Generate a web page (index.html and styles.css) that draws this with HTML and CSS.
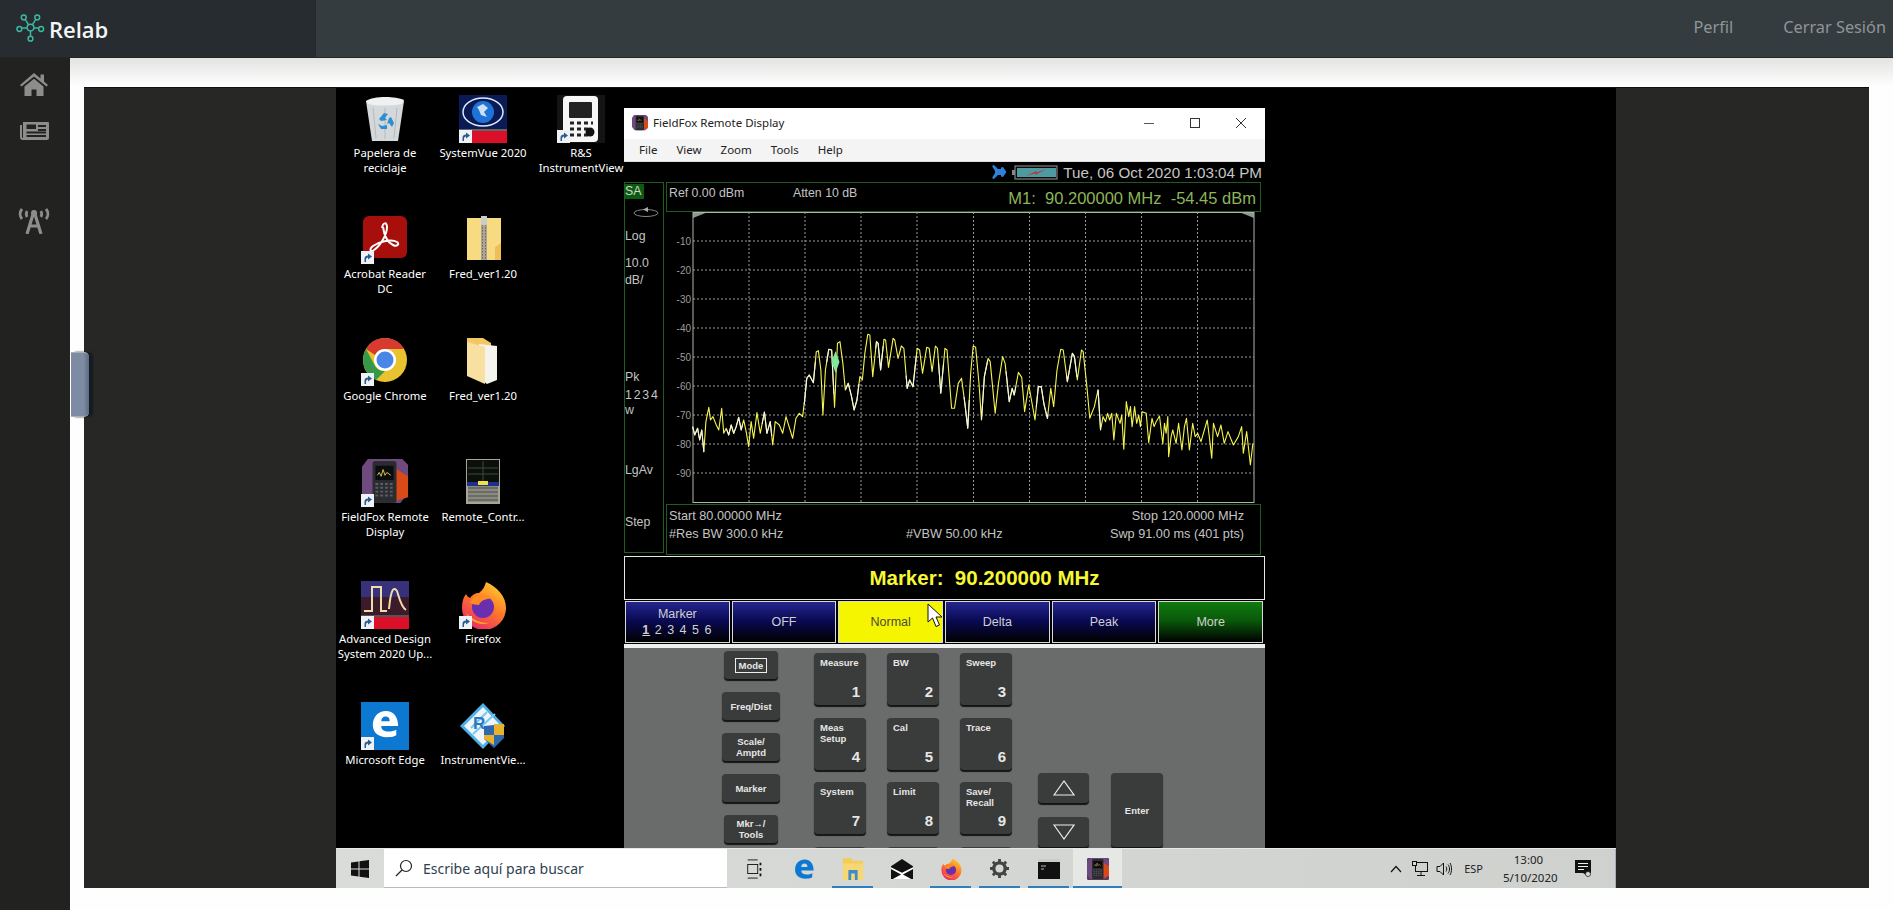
FILE: index.html
```html
<!DOCTYPE html>
<html lang="es">
<head>
<meta charset="utf-8">
<title>Relab</title>
<link rel="stylesheet" href="styles.css">
</head>
<body>
<svg class="defs" width="0" height="0" aria-hidden="true">
  <defs>
    <linearGradient id="ffg" x1="0.800" y1="0" x2="0.200" y2="1"><stop offset="0" stop-color="#ffd02e"/><stop offset=".45" stop-color="#ff7a2a"/><stop offset="1" stop-color="#e8246a"/></linearGradient>
    <symbol id="sc" viewBox="0 0 13 13"><rect width="13" height="13" fill="#eef1f5"/><path d="M3.500 11V7.500C3.500 5.500 5 4.500 7 4.500V2.500L11 5.500 7 8.500V6.500C5.800 6.500 5 7.500 5 9V11Z" fill="#2a5c94"/></symbol>
    <symbol id="ffx" viewBox="0 0 48 48">
      <path d="M27 1C38 6 47 15 47 27A22 22 0 0 1 3 27C3 21 4 17 7 13 8 15 9 16 11 17 13 14 16 12 20 12 24 9 26 5 27 1Z" fill="url(#ffg)"/>
      <circle cx="24" cy="26" r="11" fill="#6a2fb0"/>
      <path d="M11 22C14 14 26 11 34 18 28 17 22 19 20 24 17 24 14 23 11 22Z" fill="#ff8a20"/>
      <path d="M7 32C10 40 20 45 30 42 22 42 14 39 7 32Z" fill="#ffa02a"/>
    </symbol>
    <symbol id="ffd" viewBox="0 0 48 48">
      <path d="M0 8 6 0H42L48 6V36L40 46H8L0 36Z" fill="#6e4a7e"/>
      <path d="M32 8 48 18V40L34 44Z" fill="#d84a18"/>
      <rect x="11" y="2" width="25" height="44" rx="3" fill="#2a2c30"/>
      <rect x="14" y="7" width="19" height="15" fill="#0c0c10"/>
      <path d="M16 17l2-3 2 4 2-7 2 6 2-3 4 3" fill="none" stroke="#d8c84a"/>
      <path d="M14 26h19M14 30h19M14 34h19M14 38h19" stroke="#5a5c62" stroke-width="2" stroke-dasharray="3 2"/>
    </symbol>
    <symbol id="edge" viewBox="0 0 32 32">
      <path d="M3 17C3 8 9 2 17 2 25 2 30 8 30 18H12C12 22 15 24 20 24 23 24 26 23 28 22V28C25 30 22 30 18 30 9 30 3 25 3 17ZM12 13H21C21 9 19 8 16.500 8 14 8 12 10 12 13Z" fill="currentColor"/>
    </symbol>
  </defs>
</svg>

<header class="topbar">
  <div class="brand">
    <svg class="brand-logo" viewBox="0 0 30 30" fill="none" stroke="#3eb8a2" stroke-width="1.500">
      <circle cx="15" cy="14" r="3.500"/><circle cx="8" cy="3.500" r="2.500"/><circle cx="22" cy="3.500" r="2.500"/><circle cx="3.500" cy="15.500" r="2.500"/><circle cx="26" cy="15.500" r="2.500"/><circle cx="15" cy="25.500" r="2.500"/>
      <path d="M13 11 9.500 5.500M17 11l3.500-5.500M11.500 14.500H6M18.500 14.500H23.500M15 17.500V23"/>
    </svg>
    <span class="brand-name">Relab</span>
  </div>
  <nav class="topnav"><a>Perfil</a><a>Cerrar Sesión</a></nav>
</header>

<div class="shell">
  <aside class="sidebar">
    <svg class="side-home" viewBox="0 0 28 23"><path d="M14 0 20.500 5.500V1.500H24V8.500L28 12 26.500 13.500 14 3.500 1.500 13.500 0 12ZM4.500 13.500 14 5.800 23.500 13.500V23H16.500V16.500H11.500V23H4.500Z" fill="#8d8d8b"/></svg>
    <svg class="side-news" viewBox="0 0 29 20"><path d="M3 2H28a1 1 0 0 1 1 1V18a2 2 0 0 1-2 2H3a3 3 0 0 1-3-3V5H2V17a1 1 0 0 0 1 1ZM6.500 4.500V9H16V4.500ZM18 5V7H26V5ZM18 9V11H26V9ZM6.500 11.500V13.500H26V11.500ZM6.500 15V17H26V15Z" fill="#8d8d8b" fill-rule="evenodd"/></svg>
    <svg class="side-ant" viewBox="0 0 32 26" fill="none" stroke="#8d8d8b" stroke-width="2.800"><path d="M4 1C1.500 4 1.500 8 4 11M28 1C30.500 4 30.500 8 28 11M9 3C8 5 8 7 9 9M23 3C24 5 24 7 23 9"/><path d="M16 3 9 26M16 3 23 26M11.500 18H20.500" stroke-width="3.200"/><circle cx="16" cy="5" r="3" fill="#8d8d8b" stroke="none"/></svg>
  </aside>

  <main class="content">
    <div class="pull-tab"></div>
    <section class="frame">
      <div class="desktop">
        <div class="icon-grid">
          <div class="dicon"><svg viewBox="0 0 48 48"><path d="M5 6 43 6 37 46H11Z" fill="#d4d8db"/><path d="M5 6C12 1 34 1 43 5L41 9C30 11 16 11 7 9Z" fill="#eef0f1"/><path d="M12 13 15 43M36 13 33 43M24 13V44" stroke="#b4babe"/><path d="M18 24l5-6 4 1-3 4 2 2-6 1ZM30 22l3 6-2 4-3-4-2 1 2-6ZM17 29l3 5h6v-4l-5 1Z" fill="#2e8fd0"/></svg><span>Papelera de reciclaje</span></div>
          <div class="dicon"><svg viewBox="0 0 48 48"><rect x="2" width="44" height="42" rx="6" fill="#a60f0c"/><path d="M21 12C22 6 26 6 26 11 26 19 19 30 13 34 9 37 8 33 12 30 19 25 31 23 36 26 39 28 36 31 32 29 26 26 23 18 22 11" fill="none" stroke="#fff" stroke-width="2"/><use href="#sc" y="35" width="13" height="13"/></svg><span>Acrobat Reader DC</span></div>
          <div class="dicon"><svg viewBox="0 0 48 48"><circle cx="24" cy="22" r="22" fill="#e8c22f"/><path d="M24 0A22 22 0 0 1 43 11H24A11 11 0 0 0 14 17L5 11A22 22 0 0 1 24 0Z" fill="#d83a2f"/><path d="M5 11 14 28A11 11 0 0 0 24 33L15 42A22 22 0 0 1 5 11Z" fill="#36994a"/><circle cx="24" cy="22" r="11" fill="#fff"/><circle cx="24" cy="22" r="8.500" fill="#4a86e8"/><use href="#sc" y="35" width="13" height="13"/></svg><span>Google Chrome</span></div>
          <div class="dicon"><svg viewBox="0 0 48 48"><use href="#ffd" width="48" height="46"/><use href="#sc" y="35" width="13" height="13"/></svg><span>FieldFox Remote Display</span></div>
          <div class="dicon"><svg viewBox="0 0 48 48"><rect width="48" height="34" fill="#37307a"/><rect y="16" width="48" height="18" fill="#3b1a2a"/><rect y="34" width="48" height="2" fill="#555"/><rect x="13" y="36" width="35" height="12" fill="#dc0f28"/><path d="M3 30H11V6H20V30H26M28 28C30 6 33 6 36 10 38 16 40 26 45 29" fill="none" stroke="#f0dca8" stroke-width="2"/><use href="#sc" y="35" width="13" height="13"/></svg><span>Advanced Design System 2020 Up...</span></div>
          <div class="dicon"><svg viewBox="0 0 48 48"><rect width="48" height="48" fill="#0c78d2"/><use href="#edge" x="9" y="7" width="30" height="30" class="edge-white"/><use href="#sc" y="35" width="13" height="13"/></svg><span>Microsoft Edge</span></div>

          <div class="dicon"><svg viewBox="0 0 48 48"><rect width="48" height="34" fill="#0a1a55"/><ellipse cx="24" cy="17" rx="20" ry="14" fill="none" stroke="#dfe8ff" stroke-width="1.500"/><circle cx="24" cy="17" r="11" fill="#1d73d8"/><path d="M18 12l6-3 5 4-4 4 3 5-6-2-2-5Z" fill="#cfe0f5"/><rect y="34" width="48" height="2" fill="#666"/><rect x="13" y="36" width="35" height="12" fill="#dc0f28"/><use href="#sc" y="35" width="13" height="13"/></svg><span>SystemVue 2020</span></div>
          <div class="dicon"><svg viewBox="0 0 48 48"><path d="M8 2H42V44H8Z" fill="#f8da80"/><path d="M36 31 42 27V44H36Z" fill="#efbf55"/><path d="M22 0h6v44h-6Z" fill="#aaa499"/><path d="M23.500 2v42M26.500 2v42" stroke="#6e6a5e" stroke-dasharray="1.500 1.500"/><rect x="22" y="0" width="6" height="9" rx="1" fill="#c9cccc"/></svg><span>Fred_ver1.20</span></div>
          <div class="dicon"><svg viewBox="0 0 48 48"><path d="M8 0H24L32 5V34H8Z" fill="#f2c862"/><path d="M20 6 38 8V42L28 46 20 40Z" fill="#f5f3ee"/><path d="M8 4 26 9V46L8 38Z" fill="#f8e0a0"/></svg><span>Fred_ver1.20</span></div>
          <div class="dicon"><svg viewBox="0 0 48 48"><rect x="7" width="34" height="45" fill="#a8a690"/><rect x="8" y="1" width="32" height="22" fill="#0c100c"/><path d="M9 15h30M9 9h30M24 2v20" stroke="#3a4a3a"/><rect x="8" y="23" width="32" height="4" fill="#20308a"/><rect x="19" y="22" width="10" height="4" fill="#f0e040"/><path d="M9 29h30M9 33h30M9 37h30M9 41h30" stroke="#6a6c6a" stroke-width="3"/></svg><span>Remote_Contr...</span></div>
          <div class="dicon"><svg viewBox="0 0 48 48"><use href="#ffx" width="48" height="48"/><use href="#sc" y="35" width="13" height="13"/></svg><span>Firefox</span></div>
          <div class="dicon"><svg viewBox="0 0 48 48"><path d="M24 1 46 24 24 47 1 24Z" fill="#4db0e8"/><path d="M24 5 42 24 24 43 5 24Z" fill="#eef6fb"/><path d="M14 32 36 12M12 26 28 10" stroke="#7cc6ee" stroke-width="2"/><text x="14" y="27" class="rs-txt">R</text><path d="M25 24 45 22V36L35 46 25 37Z" fill="#2d69ad"/><path d="M35 22H45V33H35ZM25 33H35V43L25 37Z" fill="#e8b12e"/></svg><span>InstrumentVie...</span></div>

          <div class="dicon"><svg viewBox="0 0 48 48"><rect width="48" height="48" fill="#131413"/><rect x="6" y="1" width="35" height="46" rx="4" fill="#f6f6f6"/><rect x="12" y="7" width="23" height="16" rx="1" fill="#222"/><path d="M13 28h4M20 28h4M27 28h4M34 28h2M13 34h4M20 34h4M27 34h4M13 40h4M20 40h4M27 40h4" stroke="#222" stroke-width="3"/><circle cx="33" cy="37" r="4.500" fill="#111"/><use href="#sc" y="35" width="13" height="13"/></svg><span>R&amp;S InstrumentView</span></div>
        </div>

        <div class="window">
          <div class="win-title">
            <svg class="win-ico" viewBox="0 0 48 48"><use href="#ffd" width="48" height="48"/></svg>
            <span class="win-name">FieldFox Remote Display</span>
            <div class="win-ctrls">
              <svg viewBox="0 0 12 12"><path d="M1 6.500H11" stroke="#555"/></svg>
              <svg viewBox="0 0 12 12"><rect x="1.500" y="1.500" width="9" height="9" fill="none" stroke="#333"/></svg>
              <svg viewBox="0 0 12 12"><path d="M1 1 11 11M11 1 1 11" stroke="#333"/></svg>
            </div>
          </div>
          <div class="win-menu"><span>File</span><span>View</span><span>Zoom</span><span>Tools</span><span>Help</span></div>

          <div class="fx-status">
            <svg class="fx-plug" viewBox="0 0 16 14"><path d="M1 1 3 0 7 4H10V2.500L12 2 15.500 7 12 12 10 11.500V10H7L3 14 1 13 4 8V6Z" fill="#2f80d8"/></svg>
            <svg class="fx-batt" viewBox="0 0 46 15"><rect x="3" y="1" width="42" height="13" fill="#0a0a0a" stroke="#999"/><rect y="5" width="3" height="5" fill="#888"/><rect x="5" y="3" width="39" height="9" fill="#4f9aa0"/><path d="M14 11 25 6 24 8 34 4 23 10 24 8Z" fill="#d22020"/></svg>
            <span>Tue, 06 Oct 2020 1:03:04 PM</span>
          </div>

          <div class="fx-main">
            <div class="fx-left">
              <span class="fx-sa">SA</span>
              <svg class="fx-oval" viewBox="0 0 28 12"><ellipse cx="14" cy="7" rx="12" ry="3.500" fill="none" stroke="#888"/><path d="M11 3.500 16 1V6Z" fill="#aaa"/></svg>
              <span class="fx-log">Log</span>
              <span class="fx-scale">10.0<br>dB/</span>
              <span class="fx-pk">Pk</span>
              <span class="fx-nums">1234</span>
              <span class="fx-w">w</span>
              <span class="fx-lg">LgAv</span>
              <span class="fx-step">Step</span>
            </div>
            <div class="fx-right">
              <div class="fx-head">
                <span class="fx-ref">Ref 0.00 dBm</span><span class="fx-att">Atten 10 dB</span>
                <span class="fx-m1">M1:&nbsp; 90.200000 MHz&nbsp; -54.45 dBm</span>
              </div>
              <svg class="plot" viewBox="0 0 595 292">
                <path d="M27 0h15l-15 6ZM588 0h-15l15 6Z" fill="#8f968f"/>
                <g class="grid-lines">
                  <path d="M83 0V290M139 0V290M195 0V290M251 0V290M307.500 0V290M363.500 0V290M419.500 0V290M475.500 0V290M531.500 0V290"/>
                  <path d="M27 29H588M27 58H588M27 87H588M27 116H588M27 145H588M27 174H588M27 203H588M27 232H588M27 261H588"/>
                </g>
                <rect class="plot-box" x="27" y="0.500" width="561" height="290"/>
                <g class="ylab">
                  <text x="25" y="33">-10</text><text x="25" y="62">-20</text><text x="25" y="91">-30</text><text x="25" y="120">-40</text><text x="25" y="149">-50</text><text x="25" y="178">-60</text><text x="25" y="207">-70</text><text x="25" y="236">-80</text><text x="25" y="265">-90</text>
                </g>
                <g transform="translate(-46 78) scale(.415 .3333)">
                  <polyline class="trace trace-y" points="175,410 180,435 187,415 192,450 197,420 202,485 207,395 214,352 218,390 224,380 232,405 238,420 245,355 250,430 256,415 262,435 268,405 274,430 280,410 286,382 292,420 298,390 304,425 310,470 316,395 322,445 330,368 338,430 348,366 354,430 362,395 368,465 374,395 384,405 392,430 400,380 410,420 416,445 424,385 432,370 440,380 445,330 450,265 456,255 466,278 473,185 478,182 484,240 489,375 495,240 503,178 510,180 517,352 524,160 530,155 537,220 543,300 550,280 558,320 564,360 571,330 578,260 584,270 590,190 597,133 602,135 609,260 618,155 622,160 628,240 636,148 640,150 647,232 658,145 662,150 670,205 678,168 684,175 692,295 698,270 706,290 716,175 722,180 729,250 739,172 745,175 752,245 760,168 765,175 773,310 783,175 788,180 799,355 806,355 815,280 823,265 831,340 838,415 845,250 851,168 857,172 865,280 871,390 878,260 887,205 892,215 904,370 912,280 922,200 928,220 938,335 945,295 950,315 960,247 968,262 975,365 985,285 1000,390 1008,290 1015,290 1022,345 1030,385 1038,295 1045,350 1053,240 1062,178 1068,180 1078,275 1090,190 1095,200 1102,270 1112,180 1116,185 1125,290 1132,385 1143,350 1152,300 1158,420 1164,380 1170,395 1175,370 1180,390 1185,370 1190,450 1196,370 1205,400 1209,375 1214,478 1220,335 1226,380 1230,350 1234,410 1240,350 1245,400 1250,375 1254,410 1258,365 1268,370 1274,458 1282,385 1287,410 1292,395 1300,378 1308,462 1312,400 1316,430 1320,380 1322,500 1328,440 1332,420 1340,460 1346,400 1354,480 1360,410 1365,385 1372,480 1380,400 1386,440 1392,430 1400,455 1415,390 1420,440 1426,505 1430,400 1440,440 1448,405 1456,460 1465,425 1478,465 1490,440 1498,410 1502,490 1510,425 1519,525 1525,460"/>
                  <polyline class="trace trace-w" points="175,410 180,435 187,415 192,450 197,420 202,485 207,395 214,352 218,390 224,380 232,405 238,420 245,355 250,430 256,415 262,435 268,405 274,430 280,410 286,382 292,420 298,390 304,425 310,470 316,395 322,445 330,368 338,430 348,366 354,430 362,395 368,465 374,395 384,405 392,430 400,380 410,420 416,445 424,385 432,370 440,380 445,330 450,265 456,255 466,278 473,185 478,182 484,240 489,375 495,240 503,178 510,180 517,352 524,160 530,155 537,220 543,300 550,280 558,320 564,360 571,330 578,260 584,270 590,190 597,133 602,135 609,260 618,155 622,160 628,240 636,148 640,150 647,232 658,145 662,150 670,205 678,168 684,175 692,295 698,270 706,290 716,175 722,180 729,250 739,172 745,175 752,245 760,168 765,175 773,310 783,175 788,180 799,355 806,355 815,280 823,265 831,340 838,415 845,250 851,168 857,172 865,280 871,390 878,260 887,205 892,215 904,370 912,280 922,200 928,220 938,335 945,295 950,315 960,247 968,262 975,365 985,285 1000,390 1008,290 1015,290 1022,345 1030,385 1038,295 1045,350 1053,240 1062,178 1068,180 1078,275 1090,190 1095,200 1102,270 1112,180 1116,185 1125,290 1132,385 1143,350 1152,300 1158,420"/>
                </g>
                <path d="M169.500 139 173.500 150 169.500 161 165.500 150Z" fill="#7fe89a"/>
              </svg>
              <div class="fx-foot">
                <div class="foot-row"><span>Start 80.00000 MHz</span><span>Stop 120.0000 MHz</span></div>
                <div class="foot-row foot-three"><span>#Res BW 300.0 kHz</span><span class="foot-mid">#VBW 50.00 kHz</span><span>Swp 91.00 ms (401 pts)</span></div>
              </div>
            </div>
          </div>

          <div class="marker-bar">Marker:&nbsp; 90.200000 MHz</div>

          <div class="softkeys">
            <div class="sk"><span>Marker</span><span class="sk-nums"><b>1</b> 2 3 4 5 6</span></div>
            <div class="sk"><span>OFF</span></div>
            <div class="sk sk-on"><span>Normal</span></div>
            <div class="sk"><span>Delta</span></div>
            <div class="sk"><span>Peak</span></div>
            <div class="sk sk-more"><span>More</span></div>
            <svg class="cursor" viewBox="0 0 16 25"><path d="M1 1V19L5.500 15 9 23.500 12.500 22 9 14H15Z" fill="#fff" stroke="#111"/></svg>
          </div>

          <div class="keypad">
            <div class="kcol">
              <div class="key key-s key-nar"><span class="mode-box">Mode</span></div>
              <div class="key key-s">Freq/Dist</div>
              <div class="key key-s">Scale/<br>Amptd</div>
              <div class="key key-s">Marker</div>
              <div class="key key-s key-nar">Mkr→/<br>Tools</div>
            </div>
            <div class="knum">
              <div class="key key-n"><span>Measure</span><b>1</b></div>
              <div class="key key-n"><span>BW</span><b>2</b></div>
              <div class="key key-n"><span>Sweep</span><b>3</b></div>
              <div class="key key-n"><span>Meas<br>Setup</span><b>4</b></div>
              <div class="key key-n"><span>Cal</span><b>5</b></div>
              <div class="key key-n"><span>Trace</span><b>6</b></div>
              <div class="key key-n"><span>System</span><b>7</b></div>
              <div class="key key-n"><span>Limit</span><b>8</b></div>
              <div class="key key-n"><span>Save/<br>Recall</span><b>9</b></div>
              <div class="key key-n"></div>
              <div class="key key-n"></div>
              <div class="key key-n"></div>
            </div>
            <div class="knav">
              <div class="key key-a"><svg viewBox="0 0 22 16"><path d="M1 15 11 1 21 15Z" fill="none" stroke="#eee" stroke-width="1.200"/></svg></div>
              <div class="key key-a"><svg viewBox="0 0 22 16"><path d="M1 1 11 15 21 1Z" fill="none" stroke="#eee" stroke-width="1.200"/></svg></div>
            </div>
            <div class="key key-enter">Enter</div>
          </div>
        </div>

        <div class="taskbar">
          <svg class="tb-start" viewBox="0 0 18 18"><path d="M0 2.500 7.500 1.400V8.500H0ZM8.500 1.300 18 0V8.500H8.500ZM0 9.500H7.500V16.600L0 15.500ZM8.500 9.500H18V18L8.500 16.700Z" fill="#111"/></svg>
          <div class="tb-search">
            <svg viewBox="0 0 18 18" fill="none" stroke="#222" stroke-width="1.200"><circle cx="11" cy="7" r="5.500"/><path d="M7 11 1 17"/></svg>
            <span>Escribe aquí para buscar</span>
          </div>
          <div class="tb-apps">
            <div class="tb-app"><svg class="tb-tv" viewBox="0 0 18 22" fill="none" stroke="#111"><path d="M1 1H12M1 21H12"/><rect x="1" y="6" width="11" height="10"/><path d="M15 4v3M15 10v3M15 16v3" stroke-width="2"/></svg></div>
            <div class="tb-app tb-edge"><svg viewBox="0 0 32 32"><use href="#edge" width="32" height="32"/></svg></div>
            <div class="tb-app tb-run"><svg viewBox="0 0 22 24"><path d="M0 0H9L11 3H22V24H0Z" fill="#f3cc5a"/><path d="M0 6H22V24H0Z" fill="#f7d774"/><path d="M6 13H16V24H13V17H9V24H6Z" fill="#3a8ccc"/></svg></div>
            <div class="tb-app"><svg viewBox="0 0 24 22"><path d="M0 8 12 0 24 8V22H0Z" fill="#111"/><path d="M0 9 12 15 24 9V11L13 17 22 22H2L11 17 0 11Z" fill="#fff"/></svg></div>
            <div class="tb-app tb-run"><svg viewBox="0 0 48 48"><use href="#ffx" width="48" height="48"/></svg></div>
            <div class="tb-app tb-run"><svg class="tb-gear" viewBox="0 0 20 20"><circle cx="10" cy="10" r="6" fill="none" stroke="#444" stroke-width="3.500"/><path d="M10 0v4M10 16v4M0 10h4M16 10h4M3 3l3 3M14 14l3 3M3 17l3-3M14 6l3-3" stroke="#444" stroke-width="3"/></svg></div>
            <div class="tb-app tb-run"><svg viewBox="0 0 22 20"><rect width="22" height="20" fill="#111"/><rect width="22" height="3" fill="#ccc"/><path d="M3 7h5M3 10h3" stroke="#bbb"/></svg></div>
            <div class="tb-app tb-run tb-active"><svg viewBox="0 0 48 48"><rect width="48" height="48" rx="3" fill="#5a3a5a"/><use href="#ffd" width="48" height="48"/></svg></div>
          </div>
          <div class="tb-tray">
            <svg class="tr-chev" viewBox="0 0 12 8"><path d="M1 7 6 1.500 11 7" fill="none" stroke="#111" stroke-width="1.200"/></svg>
            <svg class="tr-net" viewBox="0 0 16 16" fill="none" stroke="#111"><rect x="3.500" y="1.500" width="12" height="9"/><path d="M9 11v3M5 14.500H13"/><rect x=".5" y=".5" width="4" height="4" fill="#ddd"/></svg>
            <svg class="tr-vol" viewBox="0 0 16 16" fill="none" stroke="#111"><path d="M1 5.500H4L7.500 2V14L4 10.500H1Z"/><path d="M10 5.500C11 7 11 9 10 10.500M12 3.500C14 6 14 10 12 12.500M14 2C16 5 16 11 14 14"/></svg>
            <span class="tr-lang">ESP</span>
            <span class="tr-clock">13:00<br>5/10/2020</span>
            <svg class="tr-note" viewBox="0 0 16 18"><path d="M0 0H16V13H10L14 17 8 13H0Z" fill="#111"/><path d="M3 3.500H13M3 6.500H13M3 9.500H9" stroke="#eee"/><circle cx="13" cy="14" r="2.500" fill="#ddd" stroke="#111" stroke-width=".7"/></svg>
          </div>
        </div>
      </div>
    </section>
  </main>
</div>
</body>
</html>
```
FILE: styles.css
```css
* { box-sizing: border-box; }
html, body { margin: 0; height: 910px; overflow: hidden; }
body { font-family: "Liberation Sans", Arial, sans-serif; background: #fdfefd; }
.defs { position: absolute; }

.topbar { height: 58px; display: flex; background: #343c3f; border-bottom: 1px solid #20282b; }
.brand { width: 316px; display: flex; align-items: center; padding-left: 16px; gap: 4px; background: #272c31; border-right: 1px solid #23282c; }
.brand-logo { width: 29px; height: 29px; }
.brand-name { color: #f4f6f6; font: 600 22px/1 "Open Sans", Lato, sans-serif; margin-top: 1px; }
.topnav { flex: 1; display: flex; justify-content: flex-end; align-items: center; gap: 50px; padding: 0 7px 3px 0; color: #8f9598; font: 16.300px "Noto Sans", sans-serif; }

.shell { display: flex; height: 852px; }
.sidebar { width: 70px; background: #222321; display: flex; flex-direction: column; align-items: center; padding: 15px 2px 0 0; }
.side-home { width: 28px; height: 23px; }
.side-news { width: 29px; height: 20px; margin-top: 24px; }
.side-ant { width: 32px; height: 26px; margin-top: 68px; }

.content { position: relative; flex: 1; padding: 29px 24px 22px 14px; background: linear-gradient(#e3e4e2, #fdfefd 28px); }
.pull-tab { position: absolute; z-index: 2; left: 1px; top: 294px; width: 18px; height: 65px; background: linear-gradient(90deg, #7d8ca2, #7d8ca2 70%, #5c6a87); border: solid #a8aeb2; border-width: 1px 0; border-radius: 0 5px 5px 0; box-shadow: 4px 0 2px #151a20; }

.frame { height: 801px; display: flex; padding-left: 252px; background: #272825; border-top: 1px solid #111; }
.desktop { position: relative; width: 1280px; height: 800px; background: #000; overflow: hidden; }

.icon-grid { display: grid; grid-auto-flow: column; grid-template-rows: repeat(6, 121.4px); grid-template-columns: repeat(3, 98px); padding-top: 7px; }
.dicon { display: flex; flex-direction: column; align-items: center; color: #fff; font: 11.300px/15px "Noto Sans", sans-serif; text-align: center; }
.dicon svg { width: 48px; height: 48px; margin-bottom: 2px; flex: none; }
.edge-white { color: #fff; }
.rs-txt { font: bold 17px "Liberation Sans", sans-serif; fill: #2d78c0; }

.window { position: absolute; left: 288px; top: 20px; width: 641px; height: 741px; background: #000; overflow: hidden; display: flex; flex-direction: column; }
.win-title { height: 31px; flex: none; background: #fff; display: flex; align-items: center; padding: 0 0 2px 8px; gap: 5px; font: 11.500px "Noto Sans", sans-serif; color: #222; }
.win-ico { width: 16px; height: 16px; }
.win-name { flex: 1; }
.win-ctrls { display: flex; gap: 34px; padding-right: 18px; }
.win-ctrls svg { width: 12px; height: 12px; }
.win-menu { height: 23px; flex: none; background: #f4f4f4; display: flex; padding-left: 15px; font: 11.500px/21px "Noto Sans", sans-serif; color: #222; border-bottom: 1px solid #ddd; gap: 19px; }

.fx-status { height: 20px; flex: none; display: flex; justify-content: flex-end; align-items: center; gap: 5px; padding-right: 3px; color: #c6c6c6; font-size: 15.200px; }
.fx-plug { width: 16px; height: 14px; }
.fx-batt { width: 46px; height: 15px; }

.fx-main { height: 373px; flex: none; display: grid; grid-template-columns: 40px 595px; gap: 0 2px; color: #c4c4c4; font-size: 12.300px; }
.fx-left { border: 1px solid #1f5a1f; display: flex; flex-direction: column; align-items: flex-start; height: 371px; }
.fx-sa { background: #0d5a12; width: 19px; height: 15px; line-height: 15px; margin-top: 1px; color: #ccd8cc; }
.fx-oval { width: 28px; height: 12px; margin: 7px 0 0 7px; }
.fx-log { margin-top: 11px; }
.fx-scale { margin-top: 12px; line-height: 17px; }
.fx-pk { margin-top: 81px; }
.fx-nums { margin-top: 4px; letter-spacing: 1.800px; }
.fx-w { margin-top: 1px; }
.fx-lg { margin-top: 46px; }
.fx-step { margin-top: 38px; }

.fx-right { display: flex; flex-direction: column; }
.fx-head { height: 30px; border: 1px solid #1f5a1f; position: relative; display: flex; padding: 3px 0 0 2px; }
.fx-ref { width: 124px; }
.fx-m1 { position: absolute; right: 4px; top: 6px; color: #8db458; font-size: 16.500px; }
.plot { width: 595px; height: 292px; display: block; flex: none; }
.grid-lines path { stroke: #9a9a9a; stroke-width: 1; stroke-dasharray: 2 2; fill: none; }
.plot-box { fill: none; stroke: #a8b8a8; }
.ylab text { font: 10px "Liberation Sans", sans-serif; fill: #9c9c9c; text-anchor: end; }
.trace { fill: none; vector-effect: non-scaling-stroke; stroke-width: 1.100; stroke-linejoin: round; }
.trace-y { stroke: #f5f550; }
.trace-w { stroke: #f4f4ee; stroke-dasharray: 60 130; }
.fx-foot { height: 51px; border: 1px solid #1f5a1f; padding: 2px 16px 0 2px; line-height: 18px; font-size: 12.700px; }
.foot-row { display: flex; justify-content: space-between; }
.foot-three { position: relative; }
.foot-mid { position: absolute; left: 237px; }

.marker-bar { height: 44px; flex: none; margin-top: 1px; padding-left: 80px; border: 1px solid #e8e8e8; color: #f7f733; font-size: 20.500px; font-weight: 700; text-align: center; line-height: 41px; }

.softkeys { position: relative; height: 44px; flex: none; display: flex; gap: 2px; padding: 1px 2px 1px 1px; }
.sk { flex: 1; display: flex; flex-direction: column; justify-content: center; align-items: center; color: #cfd0cf; font-size: 12.500px; line-height: 16px; border: 1px solid #d8d8d8; background: linear-gradient(#25258f, #0a0a55 45%, #000); }
.sk-on { background: #f5f500; color: #4a4a3a; }
.sk-more { background: linear-gradient(#0f7a0f, #0a5a0a 45%, #000); }
.sk-nums { letter-spacing: 1px; }
.sk-nums b { text-decoration: underline; }
.cursor { position: absolute; left: 303px; top: 3px; width: 16px; height: 25px; }

.keypad { flex: 1; display: flex; align-items: flex-start; padding: 3px 0 0 98px; background: #6a6b6b; border-top: 4px solid #eee; font-weight: 700; }
.key { background: #3a3b3b; color: #e6e6e6; border-radius: 4px; box-shadow: 0 1.500px 1px #141414; font-size: 9.500px; line-height: 11px; }
.kcol { width: 58px; display: flex; flex-direction: column; align-items: center; gap: 13px; }
.key-s { width: 58px; height: 28px; display: flex; align-items: center; justify-content: center; text-align: center; }
.key-nar { width: 54px; }
.mode-box { border: 1px solid #eee; padding: 1px 3px; }
.knum { margin: 2px 0 0 34px; display: grid; grid-template-columns: repeat(3, 52px); grid-auto-rows: 52px; gap: 12.500px 21px; }
.key-n { display: flex; flex-direction: column; justify-content: space-between; padding: 4px 6px 5px 6px; }
.key-n b { align-self: flex-end; font-size: 15px; line-height: 16px; }
.knav { margin: 122px 0 0 26px; width: 51px; display: flex; flex-direction: column; gap: 14px; }
.key-a { height: 30px; display: flex; align-items: center; justify-content: center; }
.key-a svg { width: 22px; height: 16px; }
.key-enter { margin: 122px 0 0 22px; width: 52px; height: 74px; display: flex; align-items: center; justify-content: center; }

.taskbar { position: absolute; left: 0; right: 0; bottom: 0; height: 40px; display: flex; align-items: center; background: linear-gradient(90deg, #dadcda, #cfd1cf); border-top: 1px solid #e8e8e8; }
.tb-start { width: 18px; height: 18px; margin-left: 15px; flex: none; }
.tb-search { width: 343px; height: 39px; margin-left: 15px; background: #fff; display: flex; align-items: center; gap: 10px; padding-left: 11px; color: #2f3f50; font: 14px "Noto Sans", sans-serif; border-bottom: 1px solid #bbb; flex: none; }
.tb-search svg { width: 18px; height: 18px; }
.tb-apps { display: flex; margin-left: 3px; height: 39px; }
.tb-app { position: relative; width: 49px; height: 39px; display: flex; align-items: center; justify-content: center; }
.tb-app svg { width: 22px; height: 22px; }
.tb-app .tb-tv { height: 20px; }
.tb-app .tb-gear { width: 19px; height: 19px; }
.tb-edge { color: #0c78d2; }
.tb-run::after { content: ""; position: absolute; left: 4px; right: 4px; bottom: 0; height: 2px; background: #2f7fc0; }
.tb-active { background: #e6e8e6; }
.tb-active::after { left: 0; right: 0; }
.tb-tray { margin-left: auto; display: flex; align-items: center; height: 39px; font: 12px "Noto Sans", sans-serif; color: #222; padding-right: 24px; border-right: 1px solid #aab; }
.tr-chev { width: 12px; height: 8px; }
.tr-net { width: 16px; height: 16px; margin-left: 10px; }
.tr-vol { width: 16px; height: 16px; margin-left: 8px; }
.tr-lang { margin-left: 12px; font-size: 11px; }
.tr-clock { margin-left: 20px; width: 51px; text-align: center; line-height: 18px; font-size: 11.500px; white-space: nowrap; }
.tr-note { width: 16px; height: 18px; margin-left: 21px; }
```
